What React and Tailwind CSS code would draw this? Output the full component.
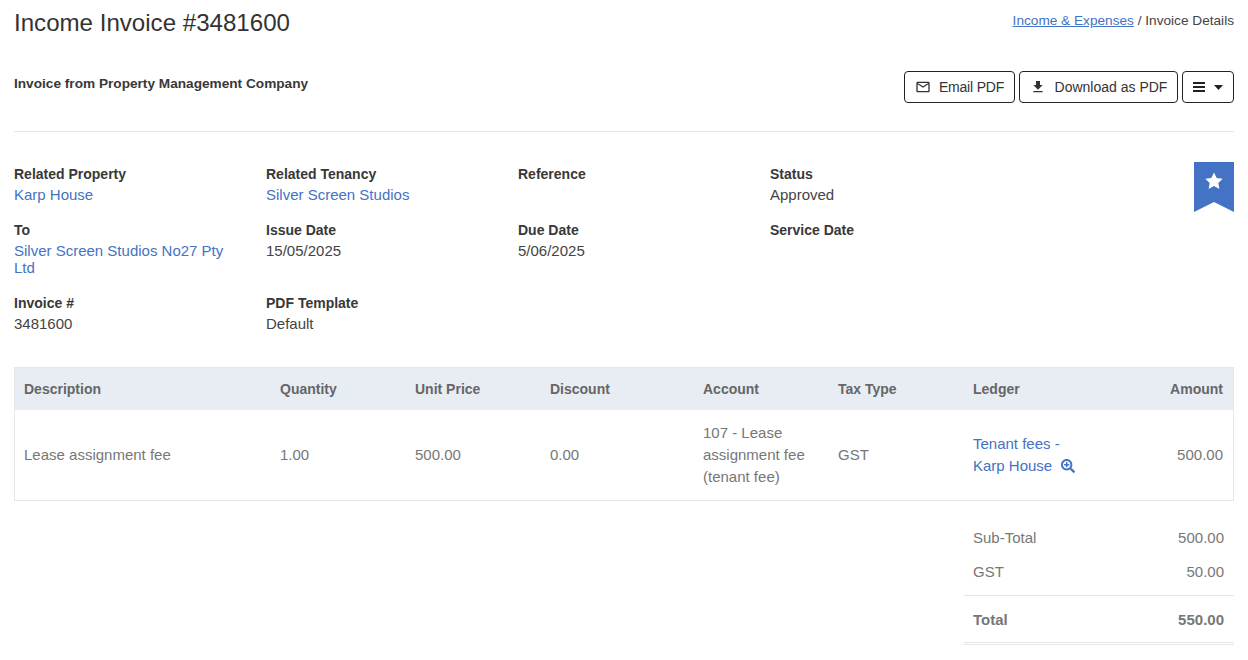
import React from "react";
import { FaSearchPlus } from "react-icons/fa";

const Field = ({ label, value, link }) => (
  <div className="h-full">
    <div className="font-bold text-[14px] leading-[17px] text-[#383838]">{label}</div>
    {value && (
      <div className={`mt-[3px] text-[15px] leading-[17px] ${link ? "text-[#4472c4]" : "text-[#444]"}`}>{value}</div>
    )}
  </div>
);

const App = () => {
  return (
    <div className="h-[660px] overflow-hidden bg-white px-[14px] font-['Liberation_Sans',Arial,sans-serif]">
      {/* Header */}
      <div className="flex justify-between pt-[8px]">
        <h1 className="text-[24.1px] leading-[29px] text-[#333]">Income Invoice #3481600</h1>
        <div className="pt-[5px] text-[13.65px] leading-[16px] text-[#444]">
          <a className="text-[#4472c4] underline">Income &amp; Expenses</a> / Invoice Details
        </div>
      </div>

      <div className="mt-[34px] flex items-start justify-between border-b border-[#e6e6e6] pb-[28px]">
        <div className="pt-[5px] text-[13.65px] font-bold leading-[16px] text-[#383838]">Invoice from Property Management Company</div>
        <div className="flex gap-[4px] text-[14px] text-[#333]">
          <button className="flex h-[32px] w-[111px] items-center justify-center gap-[8px] rounded-[4px] border border-[#222]">
            <svg width="16" height="16" viewBox="0 0 24 24" fill="#333"><path d="M20 4H4c-1.100 0-2 .9-2 2v12c0 1.100.9 2 2 2h16c1.100 0 2-.9 2-2V6c0-1.100-.9-2-2-2zm0 14H4V8l8 5 8-5v10zm-8-7L4 6h16l-8 5z" /></svg>
            <span className="tracking-[-0.2px]">Email PDF</span>
          </button>
          <button className="flex h-[32px] w-[159px] items-center justify-center gap-[9px] rounded-[4px] border border-[#222]">
            <svg width="16" height="16" viewBox="0 0 24 24" fill="#333"><path d="M19 9h-4V3H9v6H5l7 7 7-7zM5 18v2h14v-2H5z" /></svg>
            Download as PDF
          </button>
          <button className="flex h-[32px] w-[52px] items-center justify-center gap-[9px] rounded-[4px] border border-[#222]">
            <svg width="12" height="10" viewBox="0 0 12 10"><path d="M0 0h12v2H0zM0 4h12v2H0zM0 8h12v2H0z" fill="#222" /></svg>
            <svg width="9" height="5" viewBox="0 0 9 5"><path d="M0 0h9L4.500 5z" fill="#222" /></svg>
          </button>
        </div>
      </div>

      {/* Details */}
      <div className="relative mt-[34px] grid h-[187px] grid-cols-[252px_252px_252px_252px] grid-rows-[56px_73px_58px]">
        <Field label="Related Property" value="Karp House" link />
        <Field label="Related Tenancy" value="Silver Screen Studios" link />
        <Field label="Reference" />
        <Field label="Status" value="Approved" />
        <Field label="To" value={<span className="block w-[225px]">Silver Screen Studios No27 Pty Ltd</span>} link />
        <Field label="Issue Date" value="15/05/2025" />
        <Field label="Due Date" value="5/06/2025" />
        <Field label="Service Date" />
        <Field label="Invoice #" value="3481600" />
        <Field label="PDF Template" value="Default" />
        <div className="absolute right-0 top-[-4px] h-[50px] w-[40px]">
          <svg width="40" height="50" viewBox="0 0 40 50">
            <path d="M0 0h40v50L20 40 0 50z" fill="#4472c4" />
            <path d="M20 10.500l2.700 5.500 6 .8-4.400 4.200 1.100 6-5.400-2.900-5.400 2.900 1.100-6-4.400-4.200 6-.8z" fill="#fff" />
          </svg>
        </div>
      </div>

      {/* Line items */}
      <div className="mt-[14px] border border-[#e6e6e6] text-[15px] leading-[22px] text-[#777]">
        <div className="grid h-[42px] grid-cols-[256px_135px_135px_153px_135px_135px_1fr_auto] items-center bg-[#e8edf4] pl-[9px] pr-[10px] text-[14px] font-bold text-[#666]">
          <div>Description</div>
          <div>Quantity</div>
          <div>Unit Price</div>
          <div>Discount</div>
          <div>Account</div>
          <div>Tax Type</div>
          <div>Ledger</div>
          <div>Amount</div>
        </div>
        <div className="grid h-[90px] grid-cols-[256px_135px_135px_153px_135px_135px_1fr_auto] items-center pl-[9px] pr-[10px]">
          <div>Lease assignment fee</div>
          <div>1.00</div>
          <div>500.00</div>
          <div>0.00</div>
          <div className="w-[115px]">107 - Lease assignment fee (tenant fee)</div>
          <div>GST</div>
          <div className="text-[#4472c4]">
            Tenant fees -<br />
            <span className="inline-flex items-center gap-[9px]">Karp House <FaSearchPlus size={14} /></span>
          </div>
          <div>500.00</div>
        </div>
      </div>

      {/* Totals */}
      <div className="ml-auto mt-[20px] w-[270px] text-[15px] text-[#777]">
        <div className="flex h-[34px] items-center justify-between pl-[9px] pr-[10px]"><span>Sub-Total</span><span>500.00</span></div>
        <div className="flex h-[34px] items-center justify-between pl-[9px] pr-[10px]"><span>GST</span><span>50.00</span></div>
        <div className="mt-[6px] flex h-[48px] items-center justify-between border-y border-[#e6e6e6] pl-[9px] pr-[10px] pt-[2px] font-bold"><span>Total</span><span>550.00</span></div>
        <div className="mt-[1px] border-t border-[#e6e6e6]" />
      </div>
    </div>
  );
};

export default App;
